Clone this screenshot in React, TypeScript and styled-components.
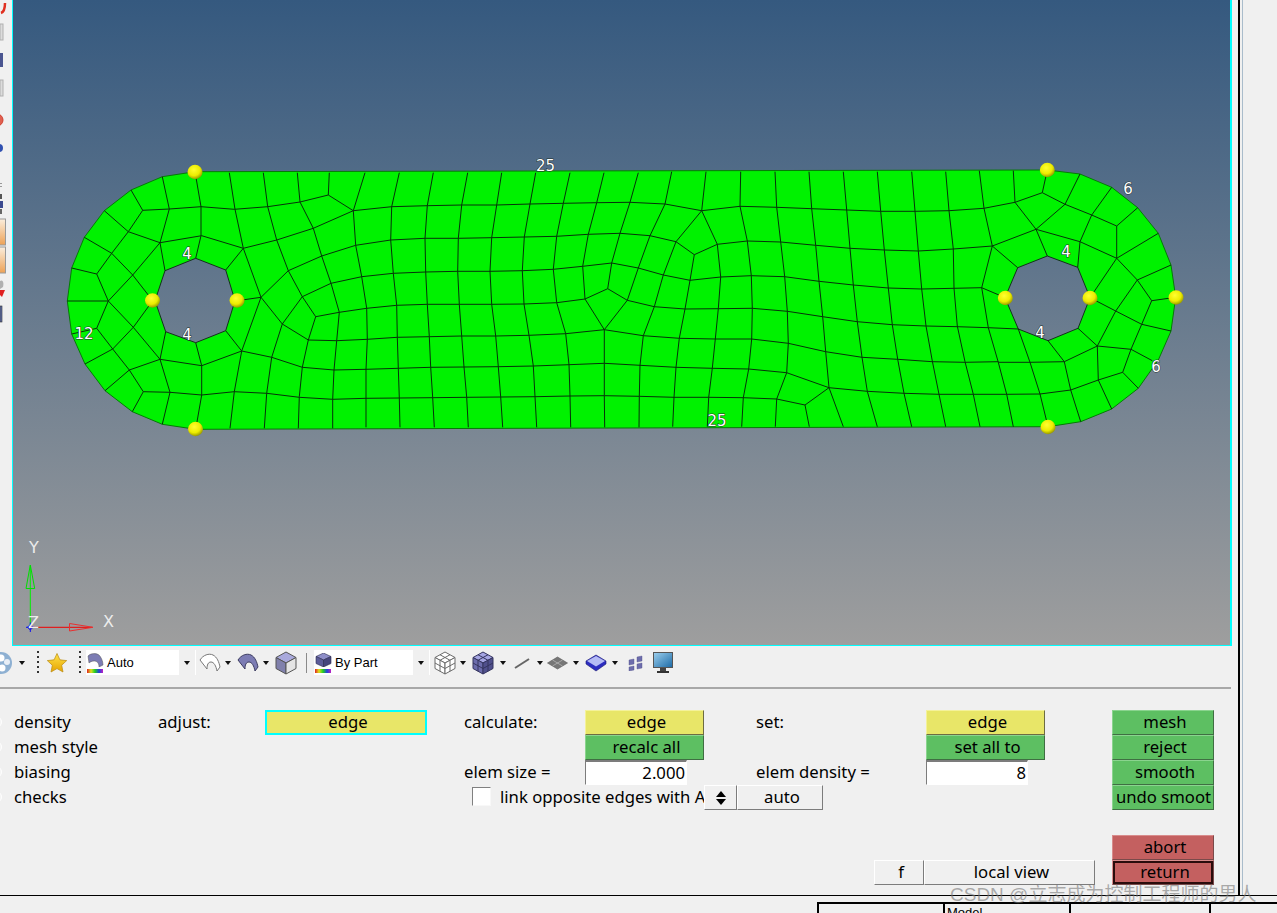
import React, { FC } from 'react'
import styled, { createGlobalStyle } from 'styled-components'

// mesh lines as measured from the picture, in tiles (page = origin + value / 3)
type Tile = { ox: number, oy: number, lines: number[][] }

const LEFT: Tile = {
  ox: 50, oy: 150, lines: [
    [435, 65, 453, 170, 453, 257, 437, 325],
    [337, 80, 358, 177, 330, 278, 345, 362],
    [243, 120, 278, 181, 235, 245, 185, 310, 140, 372, 175, 453, 140, 535, 188, 597, 238, 660, 280, 725, 247, 785],
    [163, 182, 235, 245, 330, 278],
    [103, 262, 185, 310, 248, 375, 308, 452],
    [65, 354, 140, 372],
    [52, 453, 175, 453],
    [175, 453, 248, 375, 330, 278],
    [175, 453, 250, 532, 330, 628],
    [65, 552, 140, 535],
    [105, 642, 188, 597, 250, 532, 308, 452],
    [165, 722, 238, 660, 330, 628],
    [278, 181, 358, 177, 453, 170, 553, 178, 653, 170, 750, 156, 835, 135, 910, 182],
    [330, 278, 455, 257, 580, 295, 680, 270, 790, 235, 910, 182],
    [527, 360, 580, 295],
    [538, 68, 555, 178, 580, 295, 633, 442, 697, 522, 775, 570, 860, 572, 952, 568],
    [640, 68, 653, 170, 680, 270, 715, 362, 757, 440, 797, 500],
    [742, 68, 750, 156, 790, 235, 815, 318, 843, 400, 868, 487, 860, 572, 852, 660, 848, 748, 848, 835],
    [838, 68, 835, 135],
    [633, 442, 715, 362, 815, 318, 917, 286],
    [562, 452, 633, 442],
    [527, 542, 575, 603, 633, 442],
    [697, 522, 757, 440, 843, 400, 935, 380],
    [697, 522, 665, 622],
    [797, 500, 775, 570, 757, 652, 748, 740, 745, 835],
    [797, 500, 868, 487, 950, 475],
    [575, 603, 665, 622, 757, 652, 852, 660, 948, 658],
    [437, 578, 455, 647, 575, 603],
    [347, 545, 330, 628, 455, 647],
    [330, 628, 360, 727, 337, 823],
    [280, 725, 360, 727, 455, 735, 553, 725, 650, 730, 748, 742, 848, 748, 948, 745],
    [455, 647, 455, 735, 437, 838],
    [575, 603, 553, 725, 540, 835],
    [665, 622, 650, 730, 643, 835],
  ],
}

const MIDDLE: Tile = {
  ox: 340, oy: 150, lines: [
    [40, 182, 155, 170, 262, 167, 365, 165, 470, 165, 570, 162, 670, 160, 770, 158, 870, 157, 975, 162],
    [47, 286, 152, 270, 255, 265, 355, 265, 455, 263, 553, 261, 650, 259, 745, 253, 840, 250, 930, 257],
    [65, 380, 160, 370, 257, 366, 353, 364, 450, 364, 547, 362, 640, 358, 728, 349, 815, 339, 895, 354, 970, 375],
    [80, 475, 170, 466, 262, 463, 358, 463, 455, 463, 552, 462, 650, 458, 735, 447, 803, 416, 862, 451, 943, 470, 1035, 477],
    [82, 568, 172, 562, 268, 560, 365, 558, 467, 558, 567, 556, 677, 551, 793, 539, 910, 557, 1018, 565],
    [78, 658, 175, 655, 272, 652, 372, 651, 475, 650, 580, 648, 687, 644, 793, 640, 900, 646, 1008, 652],
    [78, 745, 178, 744, 278, 743, 380, 742, 482, 741, 585, 740, 690, 738, 793, 737, 898, 739, 1002, 742],
    [75, 68, 40, 182, 47, 286, 65, 380, 80, 475, 82, 568, 78, 658, 78, 745, 78, 832],
    [178, 68, 155, 170, 152, 270, 160, 370, 170, 466, 172, 562, 175, 655, 178, 744, 180, 832],
    [280, 68, 262, 167, 255, 265, 257, 366, 262, 463, 268, 560, 272, 652, 278, 743, 283, 832],
    [383, 68, 365, 165, 355, 265, 353, 364, 358, 463, 365, 558, 372, 651, 380, 742, 385, 832],
    [485, 68, 470, 165, 455, 263, 450, 364, 455, 463, 467, 558, 475, 650, 482, 741, 488, 832],
    [587, 68, 570, 162, 553, 261, 547, 362, 552, 462, 567, 556, 580, 648, 585, 740, 590, 832],
    [690, 68, 670, 160, 650, 259, 640, 358, 650, 458, 677, 551, 687, 644, 690, 738, 692, 832],
    [792, 68, 770, 158, 745, 253, 728, 349, 735, 447, 793, 539, 793, 640, 793, 737, 794, 832],
    [895, 68, 870, 157, 840, 250, 815, 339, 803, 416],
    [793, 539, 862, 451, 895, 354, 930, 257, 975, 162],
    [910, 557, 943, 470, 970, 375, 1008, 275],
    [910, 557, 900, 646, 898, 739, 897, 832],
  ],
}

const RIGHT_MID: Tile = {
  ox: 650, oy: 150, lines: [
    [65, 65, 45, 162],
    [45, 162, 155, 182, 270, 169, 380, 172, 485, 176, 590, 180, 692, 184, 795, 184, 897, 182, 1002, 175],
    [168, 65, 155, 182, 78, 275, 133, 314, 202, 283, 155, 182],
    [0, 257, 78, 275],
    [133, 314, 120, 391, 105, 477, 88, 565, 78, 652, 72, 742, 68, 830],
    [202, 283, 212, 381, 205, 476, 196, 567, 187, 655, 176, 742, 172, 830],
    [272, 65, 270, 169, 292, 273, 304, 377, 307, 475, 305, 567, 296, 657, 280, 743, 275, 830],
    [375, 65, 380, 172, 392, 276, 404, 380, 412, 484, 415, 580, 410, 668, 380, 747, 376, 830],
    [477, 65, 485, 176, 497, 286, 507, 394, 518, 500, 527, 605, 537, 713, 580, 830],
    [580, 65, 590, 180, 600, 295, 610, 405, 622, 515, 636, 622, 652, 724, 682, 830],
    [682, 65, 692, 184, 703, 300, 715, 414, 727, 524, 743, 628, 762, 730, 785, 830],
    [785, 65, 795, 184, 805, 303, 815, 417, 828, 528, 847, 633, 867, 733, 887, 830],
    [887, 65, 897, 182, 910, 297, 912, 415, 922, 528, 945, 635, 970, 733, 990, 830],
    [40, 375, 120, 391, 212, 381, 304, 377, 404, 380, 507, 394, 610, 405, 715, 414, 815, 417, 912, 415, 995, 413],
    [202, 283, 292, 273, 392, 276, 497, 286, 600, 295, 703, 300, 805, 303, 910, 297, 1027, 288],
    [105, 477, 205, 476, 307, 475, 412, 484, 518, 500, 622, 515, 727, 524, 828, 528, 922, 530, 1015, 533],
    [88, 565, 196, 567, 305, 567, 415, 580, 527, 605, 636, 622, 743, 628, 847, 635, 945, 637, 1045, 635],
    [78, 652, 187, 655, 296, 657, 410, 668, 537, 713, 652, 724, 762, 730, 867, 733, 970, 733, 1070, 733],
    [72, 742, 176, 742, 280, 743, 380, 747, 465, 765, 537, 713],
    [465, 765, 478, 830],
  ],
}

const RIGHT: Tile = {
  ox: 950, oy: 150, lines: [
    [88, 62, 102, 175, 127, 288, 95, 413, 115, 533, 145, 637, 170, 733, 190, 830],
    [102, 175, 195, 157, 277, 128, 292, 60],
    [190, 62, 195, 157, 258, 238, 292, 318],
    [277, 128, 345, 163, 425, 195, 500, 228, 563, 173],
    [390, 72, 345, 163, 258, 238],
    [485, 112, 425, 195, 390, 275, 383, 352],
    [127, 288, 258, 238, 390, 275, 500, 325, 625, 250],
    [127, 288, 203, 353],
    [500, 228, 500, 325, 420, 443],
    [500, 325, 562, 390, 663, 345],
    [562, 390, 497, 483, 442, 588],
    [562, 390, 605, 452, 677, 442],
    [605, 452, 575, 523, 663, 543],
    [575, 523, 543, 598, 518, 667, 565, 715],
    [420, 443, 497, 483, 575, 523],
    [384, 535, 442, 588, 543, 598, 607, 632],
    [442, 588, 343, 635, 240, 637, 145, 637],
    [442, 588, 445, 690, 518, 667],
    [445, 690, 485, 777],
    [445, 690, 362, 720, 392, 815],
    [294, 572, 343, 635, 362, 720, 270, 732, 170, 733],
    [95, 413, 166, 443],
    [115, 533, 205, 537, 240, 637, 270, 732, 294, 830],
  ],
}

const LEFT_ARC = [435, 65, 337, 80, 243, 120, 163, 182, 103, 262, 65, 354, 52, 453, 65, 552, 105, 642, 165, 722, 247, 785, 337, 823, 437, 838]
const RIGHT_ARC = [294, 830, 392, 815, 485, 777, 565, 715, 625, 630, 663, 543, 677, 442, 663, 345, 625, 250, 563, 173, 485, 112, 390, 72, 292, 60]
const LEFT_HOLE = [437, 325, 527, 360, 555, 452, 527, 542, 437, 578, 347, 545, 315, 452, 345, 362]
const RIGHT_HOLE = [292, 318, 383, 352, 420, 443, 384, 535, 294, 572, 205, 537, 165, 443, 203, 353]

const toPage = (tile: { ox: number, oy: number }, values: number[]) => {
  const points: string[] = []
  for (let i = 0; i < values.length; i += 2) {
    points.push(`${(tile.ox + values[i] / 3).toFixed(1)} ${(tile.oy + values[i + 1] / 3).toFixed(1)}`)
  }
  return points
}

const toPath = (points: string[]) => `M${points.join(' L')} Z`

const PLATE_OUTLINE = toPath([...toPage(LEFT, LEFT_ARC), ...toPage(RIGHT, RIGHT_ARC)])
const PLATE_HOLES = [toPath(toPage(LEFT, LEFT_HOLE)), toPath(toPage(RIGHT, RIGHT_HOLE))].join(' ')

const NODES = [
  [195, 172], [195.5, 429], [152.5, 300.5], [237, 300.5],
  [1047.3, 170], [1048, 427], [1005.3, 298], [1090, 298], [1176, 297.5],
]

const EDGE_LABELS = [
  { x: 545.5, y: 165, text: '25' }, { x: 717, y: 420, text: '25' },
  { x: 187, y: 253, text: '4' }, { x: 187, y: 334, text: '4' }, { x: 84, y: 333, text: '12' },
  { x: 1066, y: 251, text: '4' }, { x: 1040, y: 332, text: '4' },
  { x: 1128, y: 188, text: '6' }, { x: 1156, y: 366.5, text: '6' },
]

const Mesh: FC = () => (
  <MeshSvg viewBox="13 0 1217 645">
    <defs>
      <radialGradient id="node" cx="42%" cy="35%" r="68%">
        <stop offset="0%" stopColor="#ffff30" />
        <stop offset="60%" stopColor="#ecec00" />
        <stop offset="100%" stopColor="#8f8f00" />
      </radialGradient>
    </defs>
    <path d={`${PLATE_OUTLINE} ${PLATE_HOLES}`} fill="#00f200" fillRule="evenodd" stroke="none" />
    <path d={PLATE_OUTLINE} fill="none" stroke="#067a06" strokeWidth="1" />
    <path d={PLATE_HOLES} fill="none" stroke="#14301a" strokeWidth="1" />
    {[LEFT, MIDDLE, RIGHT_MID, RIGHT].map((tile) =>
      tile.lines.map((line, i) => (
        <polyline key={`${tile.ox}-${i}`} points={toPage(tile, line).join(' ')} fill="none" stroke="#06300a" strokeWidth="1" />
      ))
    )}
    {NODES.map(([cx, cy]) => (
      <ellipse key={`${cx}-${cy}`} cx={cx} cy={cy} rx="7.5" ry="7.2" fill="url(#node)" />
    ))}
    {EDGE_LABELS.map((label) => (
      <EdgeLabel key={`${label.x}-${label.y}`} x={label.x} y={label.y + 5.5}>{label.text}</EdgeLabel>
    ))}
    <line x1="30.3" y1="627" x2="30.3" y2="566" stroke="#00f000" strokeWidth="1" />
    <polygon points="30.3,565 26,588.5 34.7,588.5" fill="none" stroke="#00e000" strokeWidth="1" />
    <line x1="30" y1="627.3" x2="92" y2="627.3" stroke="#f00000" strokeWidth="1" />
    <polygon points="93,627.3 69.5,623.5 69.5,631" fill="none" stroke="#e83030" strokeWidth="1" />
    <path d="M30.3 622.5 L30.3 632 M26 627.3 L34.5 627.3 M27.5 627.3 L30.3 624.5 L33 627.3 L30.3 630 Z" fill="none" stroke="#1010f0" strokeWidth="1" />
    <AxisLabel x="29" y="553">Y</AxisLabel>
    <AxisLabel x="28" y="628">Z</AxisLabel>
    <AxisLabel x="103" y="627">X</AxisLabel>
  </MeshSvg>
)

const LeftIcons: FC = () => (
  <svg width="12" height="325" viewBox="0 0 12 325">
    <defs>
      <linearGradient id="swatch" x1="0" y1="0" x2="0" y2="1">
        <stop offset="0%" stopColor="#fbeedd" />
        <stop offset="100%" stopColor="#eda257" />
      </linearGradient>
    </defs>
    <path d="M1 13 C4 12 5 8 5 3" fill="none" stroke="#e03020" strokeWidth="2.5" />
    <rect x="0" y="24" width="3" height="16" fill="#dcdcdc" stroke="#b0b0b0" />
    <rect x="-1" y="53" width="4" height="14" fill="#4a5590" />
    <rect x="0" y="80" width="3" height="16" fill="#dcdcdc" stroke="#b0b0b0" />
    <circle cx="-3" cy="120" r="6" fill="#e06050" stroke="#d04030" />
    <circle cx="-1" cy="148" r="4" fill="#3050b0" />
    <rect x="0" y="183" width="2" height="1" fill="#999" />
    <rect x="0" y="186" width="2" height="1" fill="#999" />
    <rect x="0" y="194" width="2" height="5" fill="#555" />
    <rect x="0" y="201" width="3" height="7" fill="#3a4a90" />
    <rect x="0" y="209" width="2" height="5" fill="#666" />
    <Swatch x="-2" y="219" width="7.5" height="26" />
    <Swatch x="-2" y="247" width="7.5" height="26" />
    <path d="M0 281 C3 279 4 283 3 287 L0 289 Z" fill="#b0b0b0" />
    <path d="M0 290 L5 290 L2 297 L0 295 Z" fill="#e02020" />
    <rect x="0" y="306" width="2" height="16" fill="#6070a8" stroke="#333" strokeWidth="0.6" />
  </svg>
)

const DropArrow: FC<{ $ml: number }> = ({ $ml }) => <Arrow $ml={$ml} />

const Tile3d: FC<{ solid?: boolean }> = ({ solid }) => {
  const stroke = solid ? '#34345f' : '#6a6a6a'
  return (
    <svg width="22" height="24" viewBox="0 0 22 24">
      <polygon points="11,1 21,6.5 11,12 1,6.5" fill={solid ? '#a5a5e2' : '#fff'} stroke={stroke} />
      <polygon points="1,6.5 11,12 11,23 1,17.5" fill={solid ? '#6c6cac' : '#fff'} stroke={stroke} />
      <polygon points="21,6.5 11,12 11,23 21,17.5" fill={solid ? '#50508c' : '#fff'} stroke={stroke} />
      <path d="M6 3.75 L16 9.25 M16 3.75 L6 9.25 M1 12 L11 17.5 L21 12 M6 9.25 L6 20.25 M16 9.25 L16 20.25" fill="none" stroke={stroke} />
    </svg>
  )
}

const Sheet: FC<{ fill: string, stroke: string }> = ({ fill, stroke }) => (
  <svg width="22" height="22" viewBox="0 0 22 22">
    <path d="M1 8 C4 3 10 1 14 3 C18 5 20 10 21 15 L18 19 C17 14 15 10 12 10 C9 10 8 13 8 17 Z" fill={fill} stroke={stroke} />
  </svg>
)

const Toolbar: FC = () => (
  <ToolRow>
    <Tool $ml={0}>
      <svg width="13" height="26" viewBox="0 0 13 26">
        <circle cx="1" cy="13" r="11" fill="#8eb0d2" />
        <circle cx="1" cy="8" r="3.5" fill="#fff" />
        <circle cx="7" cy="12" r="3" fill="#e8eef6" />
        <circle cx="2" cy="18" r="3.5" fill="#fff" />
      </svg>
    </Tool>
    <DropArrow $ml={6} />
    <Grip $ml={12} />
    <Tool $ml={8}>
      <svg width="20" height="20" viewBox="0 0 20 20">
        <defs>
          <linearGradient id="star" x1="0" y1="0" x2="0" y2="1">
            <stop offset="0%" stopColor="#ffe34a" />
            <stop offset="100%" stopColor="#e6a400" />
          </linearGradient>
        </defs>
        <polygon points="10,0.5 12.9,6.8 19.7,7.6 14.7,12.2 16,19 10,15.6 4,19 5.3,12.2 0.3,7.6 7.1,6.8" fill="url(#star)" stroke="#b98a10" strokeWidth="0.7" />
      </svg>
    </Tool>
    <Grip $ml={12} />
    <Combo $ml={5} $w={110}>
      <ComboIcon>
        <svg width="17" height="14" viewBox="0 0 17 14">
          <path d="M1 3 C4 0 9 0 12 2 C14 4 16 8 16 12 L12 14 C12 10 10 8 7 8 C5 8 3 9 2 10 Z" fill="#7c7cb4" stroke="#555" strokeWidth="0.5" />
        </svg>
        <ColorBar />
      </ComboIcon>
      <ComboText>Auto</ComboText>
      <ComboButton><Arrow $ml={0} /></ComboButton>
    </Combo>
    <Tool $ml={3}><Sheet fill="#fff" stroke="#777" /></Tool>
    <DropArrow $ml={4} />
    <Tool $ml={6}><Sheet fill="#7c7cb4" stroke="#3c3c60" /></Tool>
    <DropArrow $ml={4} />
    <Tool $ml={6}>
      <svg width="22" height="24" viewBox="0 0 22 24">
        <polygon points="11,1 21,6.5 11,12 1,6.5" fill="#a9a9dc" stroke="#555" />
        <polygon points="1,6.5 11,12 11,23 1,17.5" fill="#8080ac" stroke="#555" />
        <polygon points="21,6.5 11,12 11,23 21,17.5" fill="#e4e4e4" stroke="#555" />
      </svg>
    </Tool>
    <ToolSeparator />
    <Combo $ml={7} $w={116}>
      <ComboIcon>
        <svg width="17" height="14" viewBox="0 0 17 14">
          <polygon points="8.5,0 16,3.5 8.5,7 1,3.5" fill="#8e8ec8" stroke="#2c2c50" strokeWidth="0.6" />
          <polygon points="1,3.5 8.5,7 8.5,14 1,10.5" fill="#5c5c98" stroke="#2c2c50" strokeWidth="0.6" />
          <polygon points="16,3.5 8.5,7 8.5,14 16,10.5" fill="#46467c" stroke="#2c2c50" strokeWidth="0.6" />
        </svg>
        <ColorBar />
      </ComboIcon>
      <ComboText>By Part</ComboText>
      <ComboButton><Arrow $ml={0} /></ComboButton>
    </Combo>
    <Tool $ml={4}><Tile3d /></Tool>
    <DropArrow $ml={4} />
    <Tool $ml={6}><Tile3d solid /></Tool>
    <DropArrow $ml={6} />
    <Tool $ml={8}>
      <svg width="16" height="12" viewBox="0 0 16 12">
        <line x1="1" y1="11" x2="15" y2="2" stroke="#666" strokeWidth="2" />
      </svg>
    </Tool>
    <DropArrow $ml={7} />
    <Tool $ml={4}>
      <svg width="21" height="14" viewBox="0 0 21 14">
        <polygon points="10.5,1 20.5,7 10.5,13 0.5,7" fill="#777" stroke="#555" strokeWidth="0.6" />
        <path d="M5.5 4 L15.5 10 M15.5 4 L5.5 10" stroke="#c8c8c8" strokeWidth="0.6" />
      </svg>
    </Tool>
    <DropArrow $ml={5} />
    <Tool $ml={6}>
      <svg width="22" height="18" viewBox="0 0 22 18">
        <polygon points="11,1 21,7 21,10 11,17 1,10 1,7" fill="#2c2cc0" stroke="#1c1c70" strokeWidth="0.6" />
        <polygon points="11,2 20,7 11,12.5 2,7" fill="#b5bbf5" />
      </svg>
    </Tool>
    <DropArrow $ml={5} />
    <Tool $ml={10}>
      <svg width="15" height="16" viewBox="0 0 15 16">
        <path d="M9 2 L14 1 L14 6 L9 7 Z M1 5 L6 4 L6 9 L1 10 Z M9 9 L14 8 L14 13 L9 14 Z M1 12 L6 11 L6 15 L1 16 Z" fill="#6c6cac" stroke="#50508c" strokeWidth="0.4" />
      </svg>
    </Tool>
    <Tool $ml={10}>
      <svg width="20" height="22" viewBox="0 0 20 22">
        <defs>
          <linearGradient id="screen" x1="0" y1="0" x2="1" y2="1">
            <stop offset="0%" stopColor="#9dd0ee" />
            <stop offset="100%" stopColor="#1c6aa6" />
          </linearGradient>
        </defs>
        <rect x="0.5" y="0.5" width="19" height="15" fill="url(#screen)" stroke="#555" />
        <rect x="7" y="16" width="6" height="3" fill="#444" />
        <rect x="4" y="19" width="12" height="2" fill="#333" />
      </svg>
    </Tool>
  </ToolRow>
)

const App: FC = () => (
  <Screen>
    <GlobalStyle />
    <Workspace>
      <MainColumn>
        <ViewRow>
          <LeftStrip><LeftIcons /></LeftStrip>
          <Viewport><Mesh /></Viewport>
        </ViewRow>
        <Toolbar />
        <Divider />
        <Panel>
          <ModeList>
            {['density', 'mesh style', 'biasing', 'checks'].map((mode) => (
              <ModeRow key={mode}><RadioStub />{mode}</ModeRow>
            ))}
          </ModeList>
          <Caption $col={2} $row={1}>adjust:</Caption>
          <ActionButton $col={3} $row={1} $tone="yellow" $w={162} $focused>edge</ActionButton>
          <Caption $col={4} $row={1}>calculate:</Caption>
          <ActionButton $col={5} $row={1} $tone="yellow" $w={119}>edge</ActionButton>
          <ActionButton $col={5} $row={2} $tone="green" $w={119}>recalc all</ActionButton>
          <Caption $col={4} $row={3}>elem size =</Caption>
          <ValueField $col={5} $row={3} readOnly value="2.000" />
          <Caption $col={6} $row={1}>set:</Caption>
          <ActionButton $col={7} $row={1} $tone="yellow" $w={119}>edge</ActionButton>
          <ActionButton $col={7} $row={2} $tone="green" $w={119}>set all to</ActionButton>
          <Caption $col={6} $row={3}>elem density =</Caption>
          <ValueField $col={7} $row={3} readOnly value="8" />
          <LinkRow>
            <LinkLabel><CheckBox />link opposite edges with A</LinkLabel>
            <PlainButton $w={33}>
              <svg width="10" height="14" viewBox="0 0 10 14">
                <polygon points="5,0 10,6 0,6" fill="#000" />
                <polygon points="5,14 10,8 0,8" fill="#000" />
              </svg>
            </PlainButton>
            <LabelButton $w={86}>auto</LabelButton>
          </LinkRow>
          <ActionButton $col={8} $row={1} $tone="green" $w={102}>mesh</ActionButton>
          <ActionButton $col={8} $row={2} $tone="green" $w={102}>reject</ActionButton>
          <ActionButton $col={8} $row={3} $tone="green" $w={102}>smooth</ActionButton>
          <ActionButton $col={8} $row={4} $tone="green" $w={102} $flush>undo smoot</ActionButton>
          <ActionButton $col={8} $row={6} $tone="red" $w={102}>abort</ActionButton>
          <ViewButtons>
            <LabelButton $w={50}>f</LabelButton>
            <LabelButton $w={171}>local view</LabelButton>
          </ViewButtons>
          <ActionButton $col={8} $row={7} $tone="red" $w={102} $active>return</ActionButton>
        </Panel>
      </MainColumn>
      <RightRail />
    </Workspace>
    <StatusBar>
      <StatusCell $w={126} />
      <StatusCell $w={126}>Model</StatusCell>
      <StatusCell $w={140} />
      <StatusCell $w={68} />
    </StatusBar>
    <Watermark>CSDN @立志成为控制工程师的男人</Watermark>
  </Screen>
)

const GlobalStyle = createGlobalStyle`
html, body {
  margin: 0;
  padding: 0;
  height: 100%;
  overflow: hidden;
  background: #f0f0f0;
}
`
const Screen = styled.div`
position: relative;
width: 1277px;
height: 913px;
overflow: hidden;
background: #f0f0f0;
color: #000;
font-family: "Noto Sans", "Open Sans", sans-serif;
font-size: 16.7px;
`
const Workspace = styled.div`
display: flex;
height: 895px;
`
const MainColumn = styled.div`
display: flex;
flex-direction: column;
width: 1238px;
`
const ViewRow = styled.div`
display: flex;
height: 646px;
`
const LeftStrip = styled.div`
width: 12px;
overflow: hidden;
svg { display: block; }
`
const Viewport = styled.div`
width: 1220px;
box-sizing: border-box;
border-style: solid;
border-color: #00ffff;
border-width: 0 2px 1px 1px;
background: linear-gradient(#35597f, #9e9e9e);
`
const MeshSvg = styled.svg`
display: block;
width: 1217px;
height: 645px;
`
const EdgeLabel = styled.text`
font-family: "DejaVu Sans", sans-serif;
font-size: 15px;
text-anchor: middle;
fill: #fff;
stroke: #22302a;
stroke-width: 1px;
paint-order: stroke;
`
const AxisLabel = styled.text`
font-family: "DejaVu Sans", sans-serif;
font-size: 16px;
fill: #ececec;
`
const Swatch = styled.rect`
fill: url(#swatch);
stroke: #9a9a9a;
`
const ToolRow = styled.div`
display: flex;
align-items: center;
height: 25px;
padding-top: 4px;
padding-bottom: 12px;
`
const Tool = styled.div<{ $ml: number }>`
display: flex;
align-items: center;
flex: none;
margin-left: ${(p) => p.$ml}px;
`
const Arrow = styled.span<{ $ml: number }>`
flex: none;
margin-left: ${(p) => p.$ml}px;
width: 0;
height: 0;
border-left: 3px solid transparent;
border-right: 3px solid transparent;
border-top: 4px solid #111;
`
const Grip = styled.div<{ $ml: number }>`
flex: none;
margin-left: ${(p) => p.$ml}px;
width: 2px;
height: 24px;
background: repeating-linear-gradient(#333 0 2px, transparent 2px 5px);
`
const ToolSeparator = styled.div`
flex: none;
margin-left: 9px;
width: 1px;
height: 20px;
background: #8a8a8a;
`
const Combo = styled.div<{ $ml: number, $w: number }>`
display: flex;
align-items: center;
flex: none;
height: 25px;
width: ${(p) => p.$w}px;
margin-left: ${(p) => p.$ml}px;
background: #fff;
`
const ComboIcon = styled.div`
display: flex;
flex-direction: column;
flex: none;
width: 17px;
margin-left: 1px;
svg { display: block; }
`
const ColorBar = styled.div`
width: 16px;
height: 4px;
margin-top: 2px;
background: linear-gradient(90deg, #e02020, #e0e020, #20d020, #2040e0, #c020c0);
`
const ComboText = styled.div`
flex: 1;
margin-left: 3px;
font-family: "Liberation Sans", sans-serif;
font-size: 13px;
`
const ComboButton = styled.div`
display: flex;
align-items: center;
justify-content: center;
flex: none;
width: 16px;
height: 25px;
background: #f0f0f0;
margin-right: 1px;
`
const Divider = styled.div`
width: 1231px;
height: 2px;
background: #a8a8a8;
`
const Panel = styled.div`
display: grid;
grid-template-columns: 158px 107px 199px 121px 171px 170px 186px 102px;
grid-template-rows: repeat(7, 25px);
padding-top: 21px;
`
const ModeList = styled.div`
grid-column: 1;
grid-row: 1 / 5;
display: grid;
grid-template-rows: repeat(4, 25px);
`
const ModeRow = styled.div`
display: flex;
align-items: center;
box-sizing: border-box;
padding: 0 0 2px 14px;
position: relative;
`
const RadioStub = styled.span`
position: absolute;
left: -10px;
width: 10px;
height: 10px;
border-radius: 50%;
border: 1px solid #fff;
background: #f4f4f4;
`
const Caption = styled.div<{ $col: number, $row: number }>`
grid-column: ${(p) => p.$col};
grid-row: ${(p) => p.$row};
display: flex;
align-items: center;
padding-bottom: 2px;
`
const TONES = {
  yellow: { bg: '#e8e668', light: '#f4f29a', dark: '#6d6c42' },
  green: { bg: '#5dbf62', light: '#8ad48e', dark: '#3f6e42' },
  red: { bg: '#c46060', light: '#d88c8c', dark: '#7a4a4a' },
}
const ActionButton = styled.div<{ $col: number, $row: number, $tone: keyof typeof TONES, $w: number, $focused?: boolean, $active?: boolean, $flush?: boolean }>`
grid-column: ${(p) => p.$col};
grid-row: ${(p) => p.$row};
box-sizing: border-box;
width: ${(p) => p.$w}px;
height: 25px;
padding-left: ${(p) => (p.$flush ? 1 : 4)}px;
line-height: 21px;
text-align: center;
white-space: nowrap;
overflow: hidden;
background: ${(p) => TONES[p.$tone].bg};
border: 1px solid;
border-color: ${(p) => `${TONES[p.$tone].light} ${TONES[p.$tone].dark} ${TONES[p.$tone].dark} ${TONES[p.$tone].light}`};
${(p) => p.$focused && 'border: 2px solid #00ffff; line-height: 19px;'}
${(p) => p.$active && 'box-shadow: inset 0 0 0 2px #2a0c0c;'}
`
const ValueField = styled.input<{ $col: number, $row: number }>`
grid-column: ${(p) => p.$col};
grid-row: ${(p) => p.$row};
box-sizing: border-box;
width: 102px;
height: 25px;
padding: 0 1px 1px 0;
border-style: solid;
border-width: 2px 1px 1px 1px;
border-color: #7c7c7c #fff #fff #7c7c7c;
background: #fff;
color: #000;
font: inherit;
text-align: right;
outline: none;
`
const LinkRow = styled.div`
grid-column: 4 / 7;
grid-row: 4;
display: flex;
`
const LinkLabel = styled.div`
display: flex;
align-items: center;
flex: none;
width: 240px;
padding: 0 0 2px 8px;
box-sizing: border-box;
white-space: nowrap;
overflow: hidden;
`
const CheckBox = styled.span`
flex: none;
box-sizing: border-box;
width: 19px;
height: 19px;
margin-right: 9px;
background: #fff;
border: 1px solid;
border-color: #808080 #f8f8f8 #f8f8f8 #808080;
`
const PlainButton = styled.div<{ $w: number }>`
display: flex;
align-items: center;
justify-content: center;
flex: none;
box-sizing: border-box;
width: ${(p) => p.$w}px;
height: 25px;
background: #f0f0f0;
border: 1px solid;
border-color: #fff #7c7c7c #7c7c7c #fff;
`
const LabelButton = styled(PlainButton)`
padding: 0 0 3px 4px;
`
const ViewButtons = styled.div`
grid-column: 6 / 8;
grid-row: 7;
display: flex;
justify-content: flex-end;
padding-right: 17px;
`
const RightRail = styled.div`
box-sizing: border-box;
width: 5px;
border-left: 2px solid #000;
border-right: 1px solid #a9bccb;
margin-right: 34px;
`
const StatusBar = styled.div`
display: flex;
justify-content: flex-end;
box-sizing: border-box;
height: 18px;
padding-top: 6px;
border-top: 1px solid #000;
`
const StatusCell = styled.div<{ $w: number }>`
flex: none;
box-sizing: border-box;
width: ${(p) => p.$w}px;
height: 30px;
padding: 2px 0 0 2px;
border-top: 2px solid #000;
border-left: 2px solid #000;
font-family: "Liberation Sans", sans-serif;
font-size: 13px;
line-height: 13px;
`
const Watermark = styled.div`
position: absolute;
left: 950px;
top: 879px;
font-family: "Liberation Sans", "Noto Sans CJK SC", sans-serif;
font-size: 19px;
white-space: nowrap;
color: rgba(120, 120, 120, 0.6);
`

export default App
